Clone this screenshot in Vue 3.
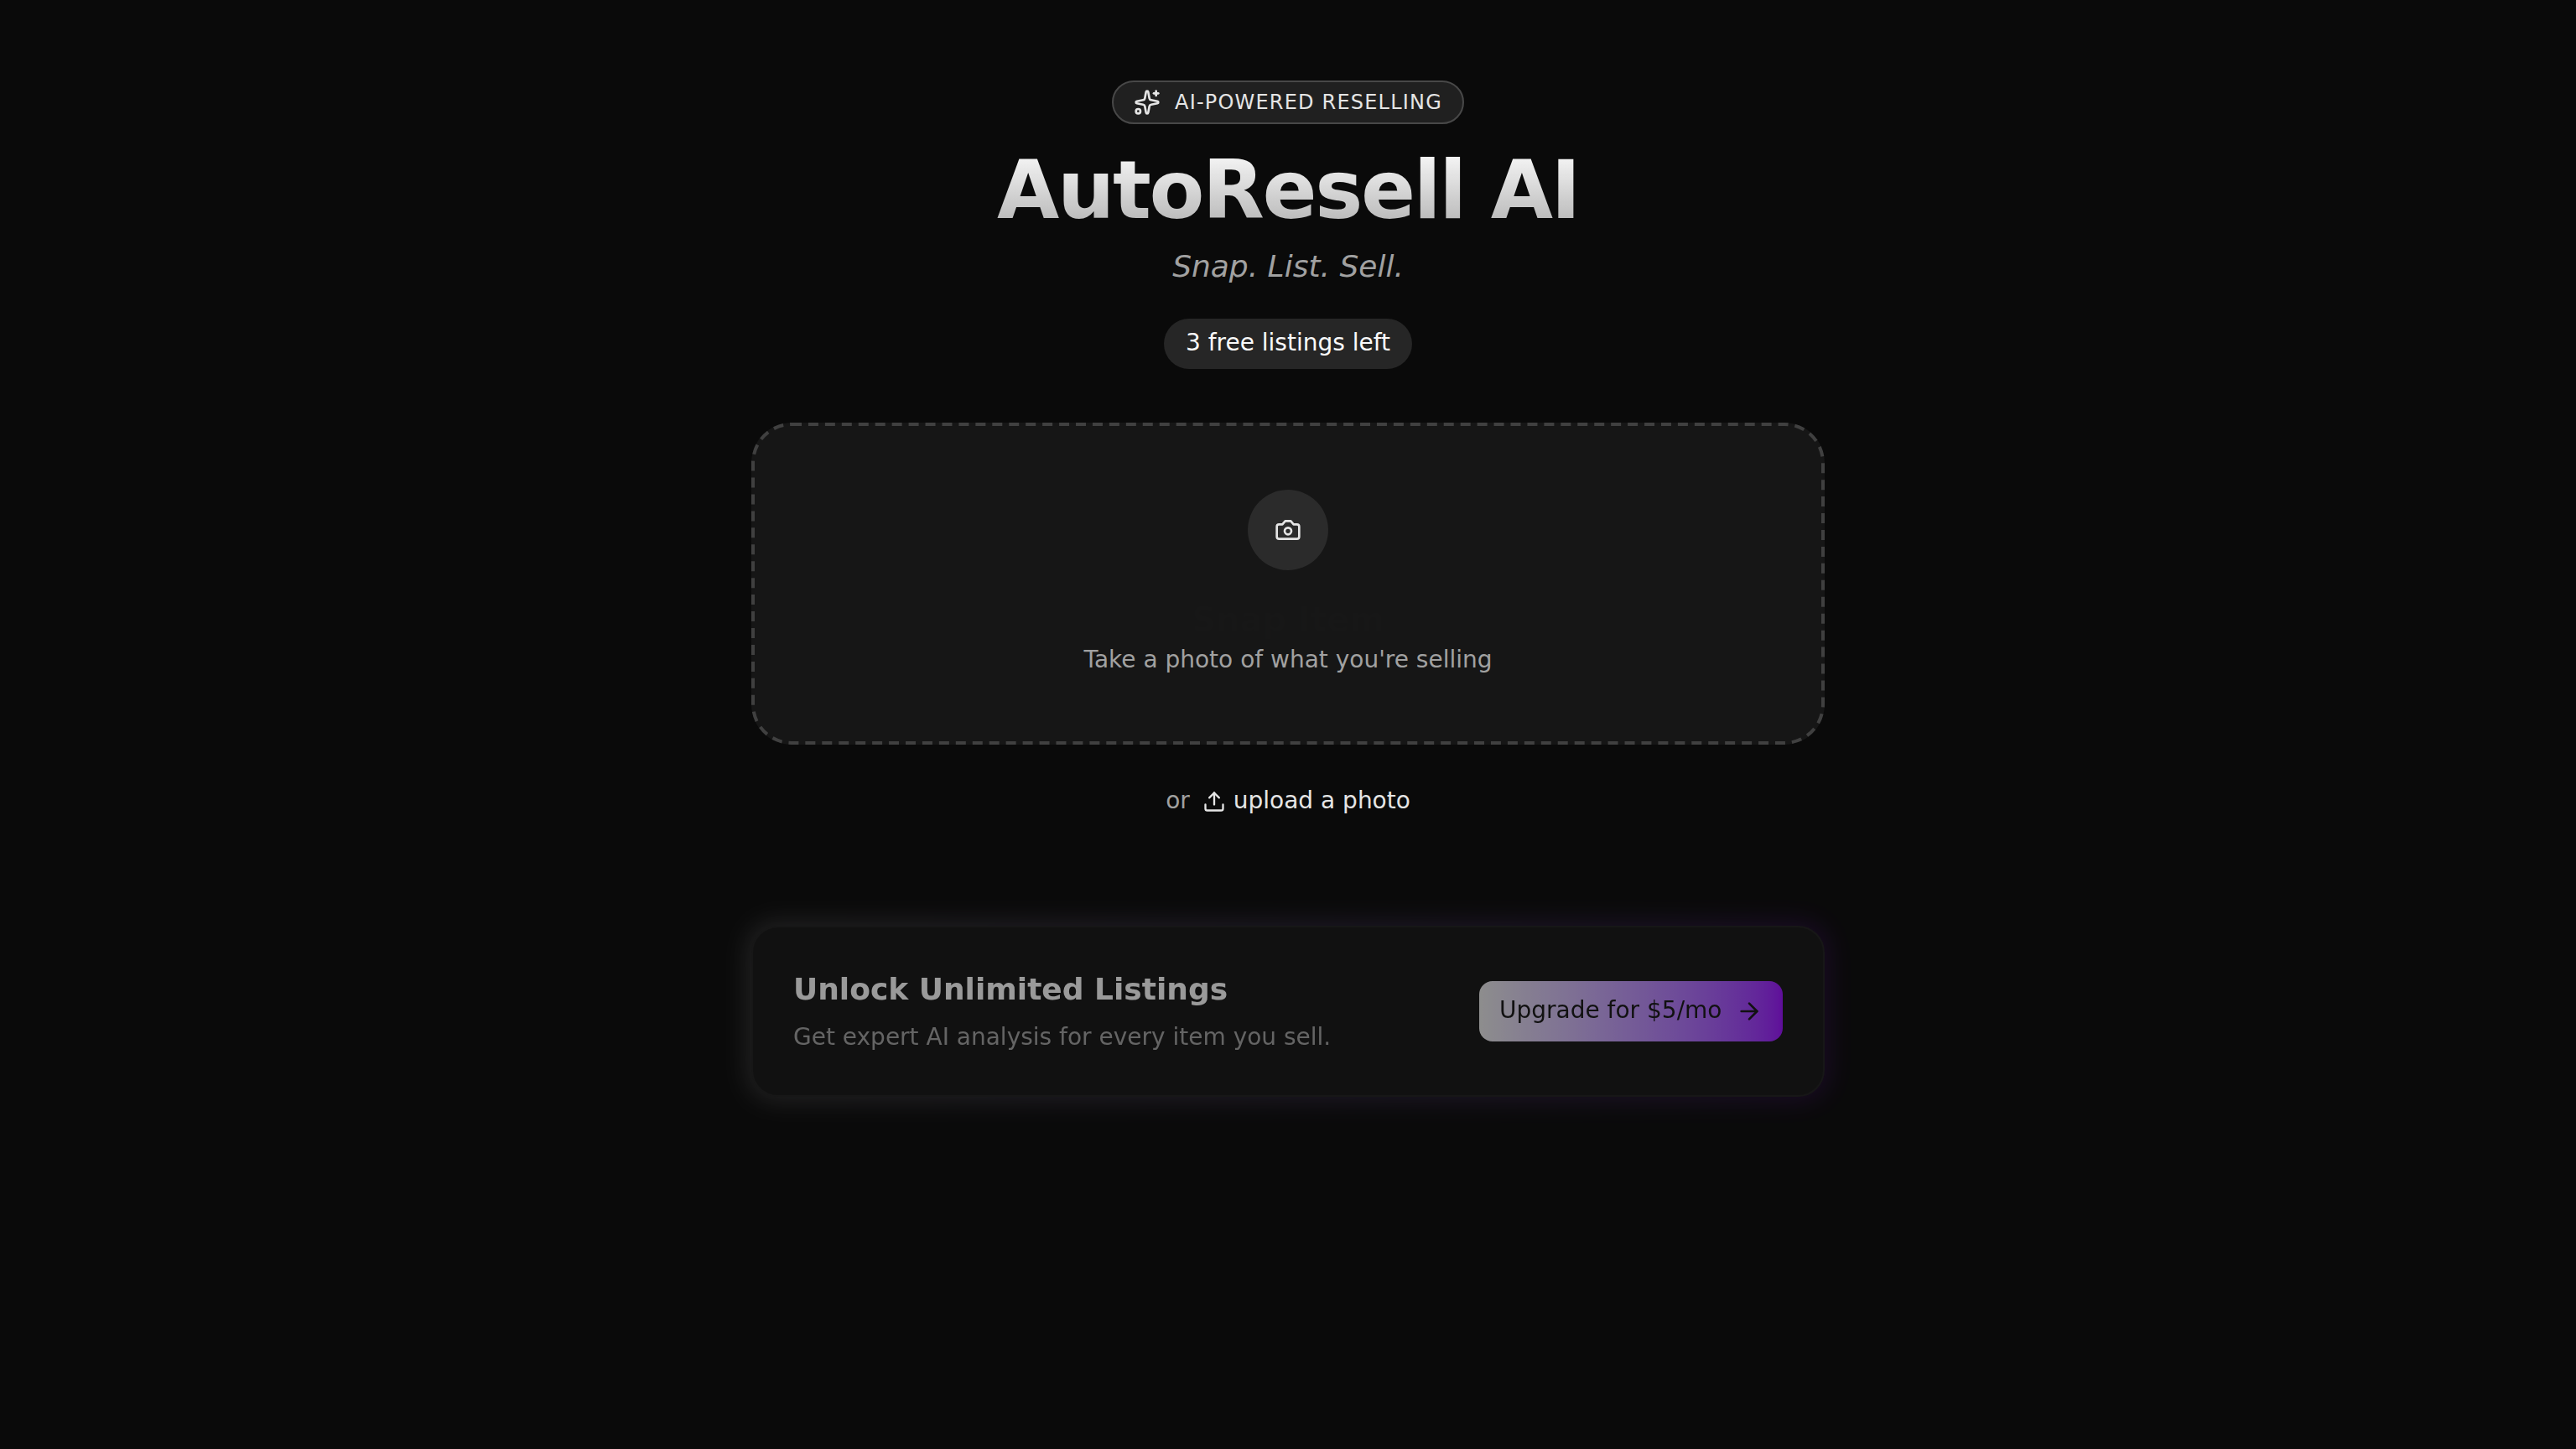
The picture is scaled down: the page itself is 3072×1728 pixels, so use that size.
<script setup>
import { ref } from 'vue';

const freeListings = ref(3);
</script>

<template>
    <main class="page">
        <header class="hero">
            <div class="badge">
                <svg class="badge-icon" viewBox="0 0 24 24">
                    <path d="M11.017 2.814a1 1 0 0 1 1.966 0l1.051 5.558a2 2 0 0 0 1.594 1.594l5.558 1.051a1 1 0 0 1 0 1.966l-5.558 1.051a2 2 0 0 0-1.594 1.594l-1.051 5.558a1 1 0 0 1-1.966 0l-1.051-5.558a2 2 0 0 0-1.594-1.594l-5.558-1.051a1 1 0 0 1 0-1.966l5.558-1.051a2 2 0 0 0 1.594-1.594z" />
                    <path d="M20 2v4" />
                    <path d="M22 4h-4" />
                    <circle cx="4" cy="20" r="2" />
                </svg>
                <span class="badge-text">AI-POWERED RESELLING</span>
            </div>
            <h1 class="title">AutoResell AI</h1>
            <p class="tagline">Snap. List. Sell.</p>
            <span class="quota">{{ freeListings }} free listings left</span>
        </header>

        <button class="dropzone">
            <svg class="dashes">
                <rect x="2" y="2" width="1276" height="380" rx="46" />
            </svg>
            <span class="camera">
                <svg class="camera-icon" viewBox="0 0 24 24">
                    <path d="M14.5 4h-5L7 7H4a2 2 0 0 0-2 2v9a2 2 0 0 0 2 2h16a2 2 0 0 0 2-2V9a2 2 0 0 0-2-2h-3l-2.5-3z" />
                    <circle cx="12" cy="13" r="3" />
                </svg>
            </span>
            <span class="dropzone-title">Snap Item</span>
            <span class="dropzone-text">Take a photo of what you're selling</span>
        </button>

        <div class="upload">
            <span class="upload-or">or</span>
            <a class="upload-link">
                <svg class="upload-icon" viewBox="0 0 24 24">
                    <path d="M12 3v12" />
                    <path d="m17 8-5-5-5 5" />
                    <path d="M21 15v4a2 2 0 0 1-2 2H5a2 2 0 0 1-2-2v-4" />
                </svg>
                <span class="upload-text">upload a photo</span>
            </a>
        </div>

        <section class="upsell">
            <div class="glow"></div>
            <div class="card">
                <div class="card-body">
                    <h3 class="card-title">Unlock Unlimited Listings</h3>
                    <p class="card-text">Get expert AI analysis for every item you sell.</p>
                </div>
                <button class="upgrade">
                    <span class="upgrade-text">Upgrade for $5/mo</span>
                    <svg class="upgrade-icon" viewBox="0 0 24 24">
                        <path d="M5 12h14" />
                        <path d="m12 5 7 7-7 7" />
                    </svg>
                </button>
            </div>
        </section>
    </main>
</template>

<style>
body {
    background: #0a0a0a;
}
</style>

<style scoped>
.page {
    box-sizing: border-box;
    width: 1280px;
    min-height: 1728px;
    margin: 0 auto;
    padding-top: 96px;
    display: flex;
    flex-direction: column;
    font-family: 'DejaVu Sans', sans-serif;
    font-size: 28px;
    line-height: 40px;
    color: #fafafa;
}

svg {
    fill: none;
    stroke: currentColor;
    stroke-width: 2;
    stroke-linecap: round;
    stroke-linejoin: round;
    flex-shrink: 0;
}

button {
    font: inherit;
    cursor: pointer;
}

.hero {
    display: flex;
    flex-direction: column;
    align-items: center;
}

.badge {
    box-sizing: border-box;
    width: 420px;
    display: flex;
    align-items: center;
    justify-content: space-between;
    padding: 8px 24px;
    border: 2px solid #484848;
    border-radius: 999px;
    background: #202020;
    color: #e5e5e5;
}

.badge-icon {
    width: 32px;
    height: 32px;
}

.badge-text {
    font-size: 24px;
    line-height: 32px;
    letter-spacing: 1.2px;
}

.title {
    margin: 31px 0 0;
    font-size: 96px;
    line-height: 96px;
    font-weight: 700;
    letter-spacing: -2.4px;
    color: transparent;
    background: linear-gradient(to bottom, #fafafa, rgba(250, 250, 250, 0.7));
    background-clip: text;
    -webkit-background-clip: text;
}

.tagline {
    margin: 15px 0 0;
    font-size: 36px;
    line-height: 56px;
    font-style: italic;
    color: #a1a1a1;
}

.quota {
    margin-top: 34px;
    padding: 7px 24px 9px;
    border: 2px solid transparent;
    border-radius: 999px;
    background: #262626;
}

.dropzone {
    position: relative;
    height: 384px;
    margin-top: 64px;
    padding: 0;
    display: flex;
    flex-direction: column;
    align-items: center;
    justify-content: center;
    border: none;
    border-radius: 48px;
    background: #161616;
}

.dashes {
    position: absolute;
    inset: 0;
    width: 100%;
    height: 100%;
    stroke: #404040;
    stroke-width: 4;
    stroke-linecap: butt;
    stroke-dasharray: 12 7.942;
}

.camera {
    width: 96px;
    height: 96px;
    margin-bottom: 32px;
    display: flex;
    align-items: center;
    justify-content: center;
    border-radius: 50%;
    background: #2b2b2b;
    color: #e5e5e5;
}

.camera-icon {
    width: 32px;
    height: 32px;
}

.dropzone-title {
    margin-bottom: 2px;
    font-size: 40px;
    line-height: 54px;
    font-weight: 600;
    color: #171717;
}

.dropzone-text {
    padding-bottom: 2px;
    line-height: 38px;
    color: #a1a1a1;
}

.upload {
    margin-top: 48px;
    display: flex;
    align-items: center;
    justify-content: center;
    gap: 15px;
}

.upload-or {
    padding-bottom: 2px;
    line-height: 38px;
    color: #a1a1a1;
}

.upload-link {
    display: flex;
    align-items: center;
    gap: 9px;
    color: #e5e5e5;
}

.upload-icon {
    width: 28px;
    height: 28px;
}

.upload-text {
    padding-bottom: 2px;
    line-height: 38px;
}

.upsell {
    position: relative;
    margin-top: 128px;
    opacity: 0.6;
}

.glow {
    position: absolute;
    inset: -4px;
    border-radius: 32px;
    background: linear-gradient(to right in oklab, #e5e5e5, #9810fa);
    opacity: 0.2;
    filter: blur(16px);
}

.card {
    position: relative;
    box-sizing: border-box;
    height: 204px;
    padding: 0 48px;
    display: flex;
    align-items: center;
    justify-content: space-between;
    border: 2px solid #202020;
    border-radius: 32px;
    background: #171717;
}

.card-title {
    margin: 0;
    font-size: 36px;
    line-height: 52px;
    font-weight: 700;
}

.card-text {
    margin: 12px 0 2px;
    line-height: 38px;
    color: #a1a1a1;
}

.upgrade {
    box-sizing: border-box;
    width: 362px;
    height: 72px;
    padding: 0 24px;
    display: flex;
    align-items: center;
    justify-content: space-between;
    border: none;
    border-radius: 16px;
    background: linear-gradient(to right in oklab, #e5e5e5, #9810fa);
    color: #171717;
}

.upgrade-text {
    padding-bottom: 2px;
    line-height: 38px;
}

.upgrade-icon {
    width: 32px;
    height: 32px;
}
</style>
